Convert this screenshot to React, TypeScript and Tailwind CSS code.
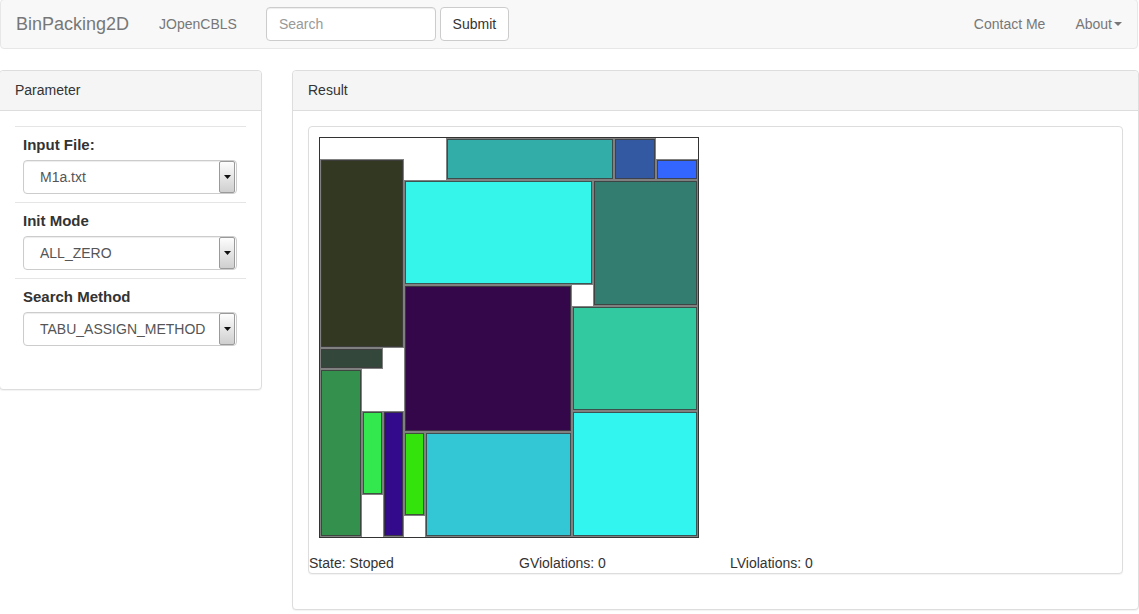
import React from "react";

const U = 21;
const rects: [number, number, number, number, string][] = [
  [6, 0, 8, 2, "#33ada8"],
  [14, 0, 2, 2, "#3359a3"],
  [16, 1, 2, 1, "#3366ff"],
  [0, 1, 4, 9, "#333822"],
  [4, 2, 9, 5, "#35f5ea"],
  [13, 2, 5, 6, "#337d70"],
  [4, 7, 8, 7, "#34064a"],
  [12, 8, 6, 5, "#33c9a0"],
  [12, 13, 6, 6, "#33f5f0"],
  [0, 10, 3, 1, "#33483a"],
  [0, 11, 2, 8, "#33904d"],
  [2, 13, 1, 4, "#33e74f"],
  [3, 13, 1, 6, "#330a8c"],
  [4, 14, 1, 4, "#33e30b"],
  [5, 14, 7, 5, "#33c7d6"],
];

function Select({ value }: { value: string }) {
  return (
    <div className="mx-[8px] flex h-[34px] w-[214px] items-center rounded-[4px] border border-[#ccc] bg-white shadow-[inset_0_1px_1px_rgba(0,0,0,0.075)]">
      <div className="flex-1 pl-[16px] text-[14px] text-[#555]">{value}</div>
      <div className="mr-[1px] flex h-[32px] w-[16px] items-center justify-center rounded-[2px] border border-[#9a9a9a] bg-gradient-to-b from-[#fdfdfd] to-[#cfcfcf]">
        <svg width="7" height="4" viewBox="0 0 7 4">
          <path d="M0 0 L7 0 L3.5 4 Z" fill="#111" />
        </svg>
      </div>
    </div>
  );
}

function Group({ label, value, last }: { label: string; value: string; last?: boolean }) {
  return (
    <div className={`border-t border-[#e5e5e5] ${last ? "pb-[28px]" : "pb-[8px]"}`}>
      <div className="px-[8px] pt-[8px] pb-[5px] text-[15px] font-bold leading-[20px] text-[#333]">{label}</div>
      <Select value={value} />
    </div>
  );
}

export default function App() {
  return (
    <div
      className="relative h-[614px] w-[1139px] overflow-hidden bg-white text-[14px] text-[#333]"
      style={{ fontFamily: '"Liberation Sans", Arial, sans-serif' }}
    >
      {/* Navbar */}
      <div className="-mt-px flex h-[50px] w-[1138px] items-center rounded-[4px] border border-[#e7e7e7] bg-[#f8f8f8]">
        <div className="pl-[15px] pr-[15px] text-[18px] leading-[20px] text-[#777]">BinPacking2D</div>
        <div className="px-[15px] text-[14px] leading-[20px] text-[#777]">JOpenCBLS</div>
        <div className="ml-[14px] flex items-center gap-[4px]">
          <div className="flex h-[34px] w-[170px] items-center rounded-[4px] border border-[#ccc] bg-white pl-[12px] text-[14px] text-[#999] shadow-[inset_0_1px_1px_rgba(0,0,0,0.075)]">
            Search
          </div>
          <div className="flex h-[34px] w-[69px] items-center justify-center rounded-[4px] border border-[#ccc] bg-white text-[14px] text-[#333]">
            Submit
          </div>
        </div>
        <div className="flex-1" />
        <div className="px-[15px] text-[14px] leading-[20px] text-[#777]">Contact Me</div>
        <div className="flex items-center px-[15px] text-[14px] leading-[20px] text-[#777]">
          About
          <span className="ml-[2px] inline-block h-0 w-0 border-x-[4px] border-t-[4px] border-x-transparent border-t-[#777]" />
        </div>
      </div>

      {/* Main */}
      <div className="mt-[21px] flex items-start">
        {/* Parameter panel */}
        <div className="-ml-px w-[263px] rounded-[4px] border border-[#ddd] bg-white shadow-[0_1px_1px_rgba(0,0,0,0.05)]">
          <div className="flex h-[40px] items-center rounded-t-[4px] border-b border-[#ddd] bg-[#f5f5f5] px-[15px] text-[14px]">
            Parameter
          </div>
          <div className="p-[15px]">
            <Group label="Input File:" value="M1a.txt" />
            <Group label="Init Mode" value="ALL_ZERO" />
            <Group label="Search Method" value="TABU_ASSIGN_METHOD" last />
          </div>
        </div>

        {/* Result panel */}
        <div className="ml-[30px] w-[847px] rounded-[4px] border border-[#ddd] bg-white shadow-[0_1px_1px_rgba(0,0,0,0.05)]">
          <div className="flex h-[40px] items-center rounded-t-[4px] border-b border-[#ddd] bg-[#f5f5f5] px-[15px] text-[14px]">
            Result
          </div>
          <div className="px-[15px] pt-[15px] pb-[35px]">
            <div className="rounded-[4px] border border-[#ddd] bg-white shadow-[0_1px_1px_rgba(0,0,0,0.05)]">
              <div className="pl-[10px] pt-[10px]">
                <div className="h-[401px] w-[380px] border border-[#333] bg-white">
                  <svg width="378" height="399" viewBox="0 0 378 399" className="block">
                    {rects.map(([x, y, w, h, c], i) => (
                      <g key={i}>
                        <rect x={x * U} y={y * U} width={w * U} height={h * U} fill="#808080" />
                        <rect
                          x={x * U + 1.5}
                          y={y * U + 1.5}
                          width={w * U - 3}
                          height={h * U - 3}
                          fill={c}
                          stroke="#333"
                          strokeOpacity={0.75}
                          strokeWidth={1}
                        />
                      </g>
                    ))}
                  </svg>
                </div>
              </div>
              <div className="mt-[15px] flex h-[20px] items-center text-[14px] leading-[20px] text-[#333]">
                <div className="w-[210px]">State: Stoped</div>
                <div className="w-[211px]">GViolations: 0</div>
                <div>LViolations: 0</div>
              </div>
            </div>
          </div>
        </div>
      </div>
    </div>
  );
}
